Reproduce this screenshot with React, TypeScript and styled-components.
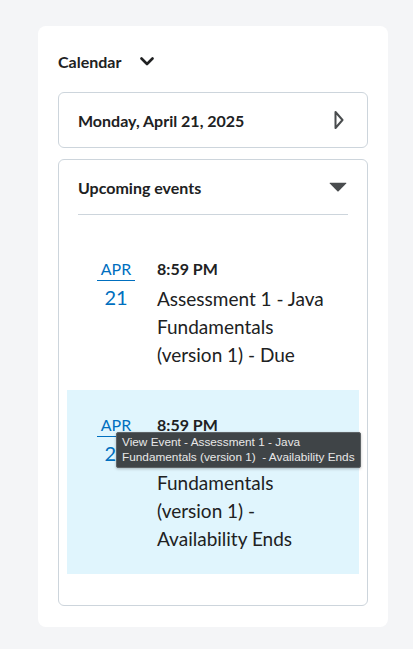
import styled, { createGlobalStyle } from 'styled-components';

const GlobalStyle = createGlobalStyle`
  body {
    margin: 0;
    background: #f4f5f7;
    font-family: Lato, "Noto Sans", sans-serif;
    color: #202122;
  }
`;

const Page = styled.div`
  padding: 26px 25px 22px 38px;
`;

const Card = styled.div`
  width: 350px;
  height: 601px;
  box-sizing: border-box;
  background: #ffffff;
  border-radius: 8px;
  padding: 20px 20px 0;
  display: flex;
  flex-direction: column;
`;

const Header = styled.div`
  height: 30px;
  display: flex;
  align-items: center;
  gap: 19px;
  margin-bottom: 16px;
  font-size: 16px;
  font-weight: 700;
`;

const Box = styled.div`
  border: 1px solid #cdd5dc;
  border-radius: 6px;
  box-sizing: border-box;
`;

const DateBox = styled(Box)`
  height: 56px;
  display: flex;
  align-items: center;
  justify-content: space-between;
  padding: 0 23px 0 19px;
  font-size: 16px;
  font-weight: 700;
  margin-bottom: 11px;
`;

const EventsBox = styled(Box)`
  height: 447px;
  display: flex;
  flex-direction: column;
`;

const EventsHeader = styled.div`
  height: 54px;
  margin: 0 19px;
  border-bottom: 1px solid #cdd5dc;
  display: flex;
  align-items: center;
  justify-content: space-between;
  font-size: 16px;
  font-weight: 700;
  padding-right: 1px;
`;

const List = styled.div`
  padding: 19px 8px 0;
  display: flex;
  flex-direction: column;
`;

const Item = styled.div<{ $active?: boolean }>`
  position: relative;
  display: flex;
  padding: 24px 12px 21px 30px;
  background: ${({ $active }) => ($active ? '#e0f5fd' : 'transparent')};
`;

const DateCol = styled.div`
  width: 38px;
  flex-shrink: 0;
  margin-right: 22px;
  display: flex;
  flex-direction: column;
  align-items: center;
  color: #006fbf;
`;

const Month = styled.div`
  width: 100%;
  text-align: center;
  font-size: 16px;
  line-height: 22px;
  border-bottom: 1.5px solid #006fbf;
`;

const Day = styled.div`
  font-size: 20px;
  line-height: 28px;
  margin-top: 2px;
`;

const Info = styled.div`
  display: flex;
  flex-direction: column;
  width: 182px;
`;

const Time = styled.div`
  font-size: 16px;
  font-weight: 700;
  line-height: 22px;
`;

const Title = styled.div`
  font-size: 19px;
  line-height: 28px;
  margin-top: 5px;
`;

const Tooltip = styled.div`
  position: absolute;
  left: 49px;
  top: 42px;
  box-sizing: border-box;
  padding: 2px 5px 2px 5px;
  background: #3f4447;
  border: 1px solid #5e6366;
  border-radius: 2px;
  box-shadow: 0 1px 3px rgba(0, 0, 0, 0.25);
  color: #e8e8e8;
  font-family: "Liberation Sans", Arial, sans-serif;
  font-size: 11.8px;
  line-height: 15px;
  white-space: nowrap;
`;

const Chevron = () => (
  <svg width="14" height="9" viewBox="0 0 14 9">
    <path d="M1.5 1.5 L7 7 L12.5 1.5" fill="none" stroke="#202122" strokeWidth="2.6" strokeLinecap="round" strokeLinejoin="round" />
  </svg>
);

const NextArrow = () => (
  <svg width="10" height="18" viewBox="0 0 10 18">
    <path d="M1.5 1 L8.5 9 L1.5 17 Z" fill="none" stroke="#494c4e" strokeWidth="2" strokeLinejoin="round" />
  </svg>
);

const CaretDown = () => (
  <svg width="18" height="10" viewBox="0 0 18 10">
    <path d="M1 0.8 L17 0.8 Q17.8 0.8 17.2 1.5 L9.6 9.3 Q9 9.9 8.4 9.3 L0.8 1.5 Q0.2 0.8 1 0.8 Z" fill="#494c4e" />
  </svg>
);

type EventData = {
  month: string;
  day: string;
  time: string;
  title: string;
  active?: boolean;
  tooltip?: string[];
};

const events: EventData[] = [
  { month: 'APR', day: '21', time: '8:59 PM', title: 'Assessment 1 - Java Fundamentals (version 1) - Due' },
  {
    month: 'APR',
    day: '21',
    time: '8:59 PM',
    title: 'Assessment 1 - Java Fundamentals (version 1) - Availability Ends',
    active: true,
    tooltip: ['View Event - Assessment 1 - Java', 'Fundamentals (version 1)\u00a0 - Availability Ends'],
  },
];

export default function App() {
  return (
    <>
      <GlobalStyle />
      <Page>
        <Card>
          <Header>
            <span>Calendar</span>
            <Chevron />
          </Header>
          <DateBox>
            <span>Monday, April 21, 2025</span>
            <NextArrow />
          </DateBox>
          <EventsBox>
            <EventsHeader>
              <span>Upcoming events</span>
              <CaretDown />
            </EventsHeader>
            <List>
              {events.map((e, i) => (
                <Item key={i} $active={e.active}>
                  <DateCol>
                    <Month>{e.month}</Month>
                    <Day>{e.day}</Day>
                  </DateCol>
                  <Info>
                    <Time>{e.time}</Time>
                    <Title>{e.title}</Title>
                  </Info>
                  {e.tooltip && (
                    <Tooltip>
                      {e.tooltip.map((line) => (
                        <div key={line}>{line}</div>
                      ))}
                    </Tooltip>
                  )}
                </Item>
              ))}
            </List>
          </EventsBox>
        </Card>
      </Page>
    </>
  );
}
